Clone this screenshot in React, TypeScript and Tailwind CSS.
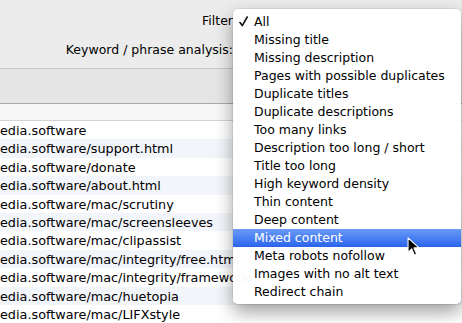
import React from 'react';

const urls = [
  'edia.software',
  'edia.software/support.html',
  'edia.software/donate',
  'edia.software/about.html',
  'edia.software/mac/scrutiny',
  'edia.software/mac/screensleeves',
  'edia.software/mac/clipassist',
  'edia.software/mac/integrity/free.html',
  'edia.software/mac/integrity/framework',
  'edia.software/mac/huetopia',
  'edia.software/mac/LIFXstyle',
];

const filters = [
  'All',
  'Missing title',
  'Missing description',
  'Pages with possible duplicates',
  'Duplicate titles',
  'Duplicate descriptions',
  'Too many links',
  'Description too long / short',
  'Title too long',
  'High keyword density',
  'Thin content',
  'Deep content',
  'Mixed content',
  'Meta robots nofollow',
  'Images with no alt text',
  'Redirect chain',
];

const Cursor = () => (
  <svg width="13" height="20" viewBox="0 0 14 22" className="absolute left-[407px] top-[237px]">
    <path d="M1 1 L1 17 L5 13 L8 20 L10.5 19 L7.5 12 L13 12 Z" fill="#000" stroke="#fff" strokeWidth="1.2" strokeLinejoin="round" />
  </svg>
);

const Check = () => (
  <svg width="9" height="11" viewBox="0 0 9 11">
    <path d="M1 6.5 L3.3 9.6 L8.2 1" fill="none" stroke="#111" strokeWidth="1.6" strokeLinecap="round" strokeLinejoin="round" />
  </svg>
);

export default function App() {
  return (
    <div className="relative w-[462px] h-[323px] overflow-hidden bg-white text-[12.5px] text-black" style={{ fontFamily: '"DejaVu Sans", "Noto Sans", sans-serif' }}>
      {/* toolbar */}
      <div className="h-[69px] bg-[#ececec] border-b border-[#c6c6c6] flex flex-col items-end pr-[229px] pt-[11px] gap-[10px]">
        <div className="leading-[19px]">Filter</div>
        <div className="leading-[19px]">Keyword / phrase analysis:</div>
      </div>
      <div className="h-[35px] bg-[#e5e5e5] border-b border-[#a9a9a9]" />
      <div className="h-[17px] bg-[#f7f7f7] border-b border-[#d4d4d4]" />
      {/* rows */}
      <div className="flex flex-col text-[12.8px]">
        {urls.map((u, i) => (
          <div key={u} className={`h-[18.4px] leading-[19px] whitespace-nowrap ${i % 2 === 1 ? 'bg-[#f2f5f9]' : 'bg-white'}`}>
            {u}
          </div>
        ))}
      </div>

      {/* popup menu */}
      <div className="absolute left-[233px] top-[9px] w-[228px] rounded-[5px] bg-white/[0.97] py-[3.5px] shadow-[0_8px_18px_rgba(0,0,0,0.38),0_0_0_0.5px_rgba(0,0,0,0.12)]">
        {filters.map((f, i) => (
          <div
            key={f}
            className={`flex items-center h-[18px] leading-[18px] whitespace-nowrap ${i === 12 ? 'bg-gradient-to-b from-[#6a9af7] to-[#2b63ec] text-white' : ''}`}
          >
            <span className="w-[21px] pl-[6px] flex items-center">{i === 0 ? <Check /> : null}</span>
            <span>{f}</span>
          </div>
        ))}
      </div>
      <Cursor />
    </div>
  );
}
